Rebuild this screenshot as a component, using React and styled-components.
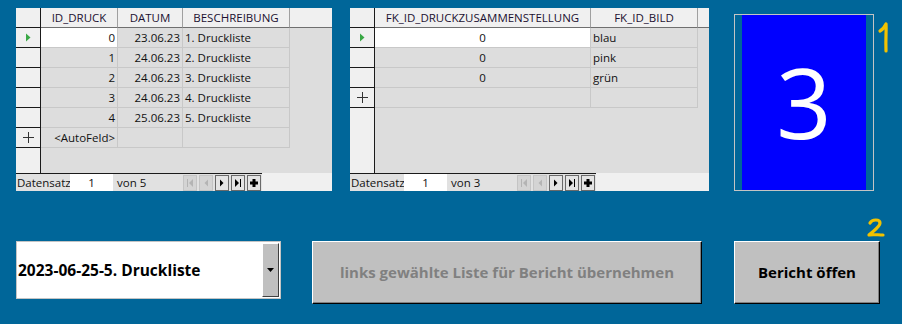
import React from "react";
import styled, { createGlobalStyle } from "styled-components";

const Global = createGlobalStyle`
  html, body { margin: 0; padding: 0; background: #006699; }
  body { width: 902px; height: 324px; overflow: hidden; }
`;

const Page = styled.div`
  position: relative;
  width: 902px;
  height: 324px;
  box-sizing: border-box;
  padding: 8px 0 0 16px;
  background: #006699;
  font-family: "Open Sans", "Noto Sans", sans-serif;
`;

const TopRow = styled.div`
  display: flex;
  align-items: flex-start;
`;

const GridBox = styled.div`
  width: ${(p) => p.$w}px;
  height: 183px;
  margin-right: ${(p) => p.$mr}px;
  display: flex;
  flex-direction: column;
  background: #dddddd;
  font-size: 11.5px;
  color: #111;
`;

const Row = styled.div`
  display: flex;
  height: 20px;
  flex: none;
  background: ${(p) => (p.$header ? "#f0f0f0" : "transparent")};
`;

const Cell = styled.div`
  box-sizing: border-box;
  width: ${(p) => p.$w}px;
  flex: none;
  height: 20px;
  line-height: 19px;
  padding: 0 2px;
  white-space: nowrap;
  overflow: hidden;
  text-align: ${(p) => p.$align || "left"};
  background: ${(p) => (p.$active ? "#ffffff" : p.$header ? "#f0f0f0" : "#dddddd")};
  border-right: 1px solid ${(p) => (p.$header ? "#a0a0a0" : "#c8c8c8")};
  border-bottom: 1px solid ${(p) => (p.$header ? "#6f6f6f" : "#c8c8c8")};
  color: ${(p) => (p.$header ? "#1c1030" : "#111")};
`;

const HeaderRest = styled.div`
  flex: 1;
  height: 20px;
  box-sizing: border-box;
  border-bottom: 1px solid #6f6f6f;
  background: #f0f0f0;
`;

const Selector = styled.div`
  box-sizing: border-box;
  width: 25px;
  flex: none;
  height: ${(p) => (p.$fill ? "auto" : "20px")};
  align-self: stretch;
  background: #f0f0f0;
  border-right: 1px solid #1a1a1a;
  border-bottom: ${(p) => (p.$fill ? "none" : "1px solid #1a1a1a")};
  display: flex;
  align-items: center;
  justify-content: center;
  color: #333;
`;

const Filler = styled.div`
  flex: 1;
  display: flex;
`;

const NavBar = styled.div`
  flex: none;
  height: 18px;
  display: flex;
  background: #f0f0f0;
`;

const NavInner = styled.div`
  box-sizing: border-box;
  width: ${(p) => p.$w}px;
  height: 18px;
  display: flex;
  align-items: center;
  background: #e1e1e1;
  border-top: 1px solid #1a1a1a;
`;

const NavLabel = styled.span`
  padding-left: 1px;
  width: 53px;
  flex: none;
  line-height: 17px;
`;

const NavInput = styled.div`
  width: ${(p) => p.$w}px;
  flex: none;
  height: 17px;
  line-height: 17px;
  background: #fff;
  text-align: center;
`;

const NavCount = styled.span`
  padding-left: 4px;
  flex: 1;
  line-height: 17px;
`;

const NavButtons = styled.div`
  display: flex;
  gap: 2px;
  padding-right: 1px;
`;

const NavBtn = styled.div`
  box-sizing: border-box;
  width: 14px;
  height: 16px;
  border: 1px solid ${(p) => (p.$off ? "#c4c4c4" : "#6a6a6a")};
  background: ${(p) => (p.$off ? "#d4d4d4" : "#e4e4e4")};
  display: flex;
  align-items: center;
  justify-content: center;
`;

const PictureFrame = styled.div`
  position: relative;
  box-sizing: border-box;
  width: 140px;
  height: 177px;
  margin-top: 6px;
  border: 1px solid #c4c4c4;
  padding: 0 7px;
`;

const PictureFill = styled.div`
  height: 100%;
  background: #0000ff;
  color: #fff;
  display: flex;
  align-items: center;
  justify-content: center;
  font-family: "Open Sans", "Noto Sans", sans-serif;
  font-size: 97px;
  font-weight: 400;
  line-height: 1;
  padding-bottom: 2px;
  box-sizing: border-box;
`;

const Marker = styled.svg`
  position: absolute;
  overflow: visible;
`;

const BottomRow = styled.div`
  display: flex;
  align-items: flex-start;
  margin-top: 50px;
`;

const Combo = styled.div`
  box-sizing: border-box;
  width: 265px;
  height: 58px;
  margin-right: 31px;
  background: #fff;
  border: 1px solid #c4c4c4;
  display: flex;
  align-items: stretch;
  padding: 1px 1px 1px 0;
`;

const ComboText = styled.div`
  flex: 1;
  display: flex;
  align-items: center;
  padding-left: 1px;
  font-weight: 700;
  font-size: 15.5px;
  color: #000;
`;

const ComboButton = styled.div`
  box-sizing: border-box;
  width: 17px;
  background: #c0c0c0;
  border-top: 1px solid #fff;
  border-left: 1px solid #fff;
  border-right: 1px solid #404040;
  border-bottom: 1px solid #404040;
  display: flex;
  align-items: center;
  justify-content: center;
`;

const Button = styled.div`
  position: relative;
  box-sizing: border-box;
  width: ${(p) => p.$w}px;
  height: 63px;
  margin-right: ${(p) => p.$mr || 0}px;
  background: #c0c0c0;
  border-top: 1px solid #fff;
  border-left: 1px solid #fff;
  border-right: 1px solid #000;
  border-bottom: 1px solid #000;
  box-shadow: inset -1px -1px 0 #808080;
  display: flex;
  align-items: center;
  justify-content: center;
  font-weight: 700;
  font-size: 15px;
  color: ${(p) => (p.$disabled ? "#808080" : "#000")};
  padding-bottom: 2px;
`;

const Arrow = ({ type, off }) => {
  const c = off ? "#b4b4b4" : "#000";
  if (type === "first")
    return (
      <svg width="8" height="10" viewBox="0 0 8 10">
        <rect x="1" y="1" width="1" height="8" fill={c} />
        <path d="M7 1 L3 5 L7 9 Z" fill={c} />
      </svg>
    );
  if (type === "prev")
    return (
      <svg width="8" height="10" viewBox="0 0 8 10">
        <path d="M6 1.5 L2.5 5 L6 8.5 Z" fill={c} />
      </svg>
    );
  if (type === "next")
    return (
      <svg width="8" height="10" viewBox="0 0 8 10">
        <path d="M2 1.5 L5.5 5 L2 8.5 Z" fill={c} />
      </svg>
    );
  if (type === "last")
    return (
      <svg width="8" height="10" viewBox="0 0 8 10">
        <path d="M1 1 L5 5 L1 9 Z" fill={c} />
        <rect x="6" y="1" width="1" height="8" fill={c} />
      </svg>
    );
  return (
    <svg width="10" height="10" viewBox="0 0 10 10">
      <path d="M3.5 1 H6.5 V3.5 H9 V6.5 H6.5 V9 H3.5 V6.5 H1 V3.5 H3.5 Z" fill={c} />
    </svg>
  );
};

const Current = () => (
  <svg width="6" height="9" viewBox="0 0 6 9">
    <path d="M1 0.5 L5.5 4.5 L1 8.5 Z" fill="#39a845" />
  </svg>
);

const NewRow = () => (
  <svg width="11" height="11" viewBox="0 0 11 11">
    <path d="M5.5 0 V11 M0 5.5 H11" stroke="#333" strokeWidth="1" />
  </svg>
);

const Navigator = ({ width, count, inputW }) => (
  <NavBar>
    <NavInner $w={width}>
      <NavLabel>Datensatz</NavLabel>
      <NavInput $w={inputW}>1</NavInput>
      <NavCount>von {count}</NavCount>
      <NavButtons>
        <NavBtn $off><Arrow type="first" off /></NavBtn>
        <NavBtn $off><Arrow type="prev" off /></NavBtn>
        <NavBtn><Arrow type="next" /></NavBtn>
        <NavBtn><Arrow type="last" /></NavBtn>
        <NavBtn><Arrow type="new" /></NavBtn>
      </NavButtons>
    </NavInner>
  </NavBar>
);

const DataGrid = ({ width, mr, columns, rows, navWidth, count, inputW }) => (
  <GridBox $w={width} $mr={mr}>
    <Row $header>
      <Selector />
      {columns.map((c) => (
        <Cell key={c.title} $w={c.w} $header $align="center">
          {c.title}
        </Cell>
      ))}
      <HeaderRest />
    </Row>
    {rows.map((r, i) => (
      <Row key={i}>
        <Selector>{i === 0 ? <Current /> : null}</Selector>
        {columns.map((c, j) => (
          <Cell key={j} $w={c.w} $align={c.align} $active={i === 0 && j === 0}>
            {r[j]}
          </Cell>
        ))}
      </Row>
    ))}
    <Row>
      <Selector>
        <NewRow />
      </Selector>
      {columns.map((c, j) => (
        <Cell key={j} $w={c.w} $align={c.align}>
          {j === 0 && c.auto ? "<AutoFeld>" : ""}
        </Cell>
      ))}
    </Row>
    <Filler>
      <Selector $fill />
    </Filler>
    <Navigator width={navWidth} count={count} inputW={inputW} />
  </GridBox>
);

const grid1Cols = [
  { title: "ID_DRUCK", w: 77, align: "right", auto: true },
  { title: "DATUM", w: 65, align: "right" },
  { title: "BESCHREIBUNG", w: 107, align: "left" },
];
const grid1Rows = [
  ["0", "23.06.23", "1. Druckliste"],
  ["1", "24.06.23", "2. Druckliste"],
  ["2", "24.06.23", "3. Druckliste"],
  ["3", "24.06.23", "4. Druckliste"],
  ["4", "25.06.23", "5. Druckliste"],
];

const grid2Cols = [
  { title: "FK_ID_DRUCKZUSAMMENSTELLUNG", w: 216, align: "center" },
  { title: "FK_ID_BILD", w: 107, align: "left" },
];
const grid2Rows = [
  ["0", "blau"],
  ["0", "pink"],
  ["0", "grün"],
];

export default function App() {
  return (
    <Page>
      <Global />
      <TopRow>
        <DataGrid width={316} mr={18} columns={grid1Cols} rows={grid1Rows} navWidth={246} count={5} inputW={43} />
        <DataGrid width={359} mr={25} columns={grid2Cols} rows={grid2Rows} navWidth={246} count={3} inputW={43} />
        <PictureFrame>
          <PictureFill>3</PictureFill>
          <Marker width="14" height="32" viewBox="0 0 14 32" style={{ left: 144, top: 7 }}>
            <path d="M1 9 C3 8 5 6 7 2 C7.5 8 6.5 16 7 29" fill="none" stroke="#f2c200" strokeWidth="3.2" strokeLinecap="round" strokeLinejoin="round" />
          </Marker>
        </PictureFrame>
      </TopRow>
      <BottomRow>
        <Combo>
          <ComboText>2023-06-25-5. Druckliste</ComboText>
          <ComboButton>
            <svg width="7" height="4" viewBox="0 0 7 4">
              <path d="M0 0 H7 L3.5 4 Z" fill="#000" />
            </svg>
          </ComboButton>
        </Combo>
        <Button $w={390} $mr={32} $disabled>
          links gewählte Liste für Bericht übernehmen
        </Button>
        <Button $w={146}>
          Bericht öffen
          <Marker width="18" height="20" viewBox="0 0 18 20" style={{ left: 132, top: -24 }}>
            <path d="M3 5 C5 1 13 1 13 5 C13 9 6 13 2 17 C6 16 11 17 16 17" fill="none" stroke="#f2c200" strokeWidth="3.2" strokeLinecap="round" strokeLinejoin="round" />
          </Marker>
        </Button>
      </BottomRow>
    </Page>
  );
}
